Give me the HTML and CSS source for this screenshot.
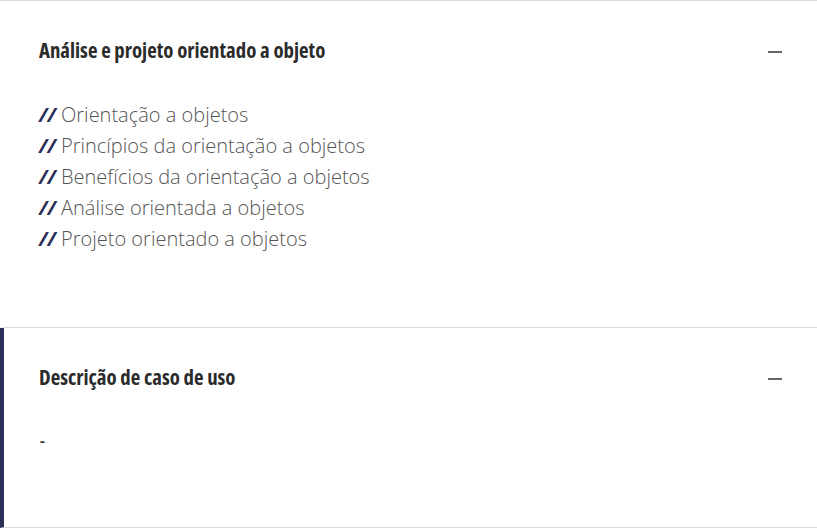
FILE: index.html
```html
<!DOCTYPE html>
<html lang="pt">
<head>
<meta charset="utf-8">
<link rel="stylesheet" href="styles.css">
</head>
<body>
<div class="accordion">
  <section class="panel">
    <div class="panel-head">
      <h3 class="panel-title">Análise e projeto orientado a objeto</h3>
      <span class="toggle"></span>
    </div>
    <ul class="topics">
      <li><b class="sl">//</b> Orientação a objetos</li>
      <li><b class="sl">//</b> Princípios da orientação a objetos</li>
      <li><b class="sl">//</b> Benefícios da orientação a objetos</li>
      <li><b class="sl">//</b> Análise orientada a objetos</li>
      <li><b class="sl">//</b> Projeto orientado a objetos</li>
    </ul>
  </section>
  <section class="panel active">
    <div class="panel-head">
      <h3 class="panel-title">Descrição de caso de uso</h3>
      <span class="toggle"></span>
    </div>
    <p class="empty">-</p>
  </section>
</div>
</body>
</html>
```
FILE: styles.css
```css
html, body { margin: 0; padding: 0; background: #fff; }
body { font-family: "Open Sans", "DejaVu Sans", sans-serif; color: #2a2a2a; }
.accordion { border-top: 1px solid #dcdcdc; }
.panel { border-bottom: 1px solid #dcdcdc; border-left: 4px solid transparent; padding: 0 35px; box-sizing: border-box; }
.panel:first-child { height: 327px; }
.panel.active { border-left-color: #2b3058; height: 200px; }
.panel-head { display: flex; align-items: center; justify-content: space-between; height: 98px; }
.panel-title { margin: 0; font-size: 20.8px; font-weight: 700; font-stretch: 75%; color: #2b2b2b; letter-spacing: 0; }
.toggle { width: 14px; height: 2px; background: #666; margin-top: 3px; }
.topics { list-style: none; margin: 0; padding: 0; font-size: 20px; font-weight: 300; line-height: 31px; color: #555; }
.sl { font-weight: 700; font-style: italic; color: #2b3058; }
.empty { margin: 4px 0 0 1px; font-size: 15px; font-weight: 700; color: #333; }
```
